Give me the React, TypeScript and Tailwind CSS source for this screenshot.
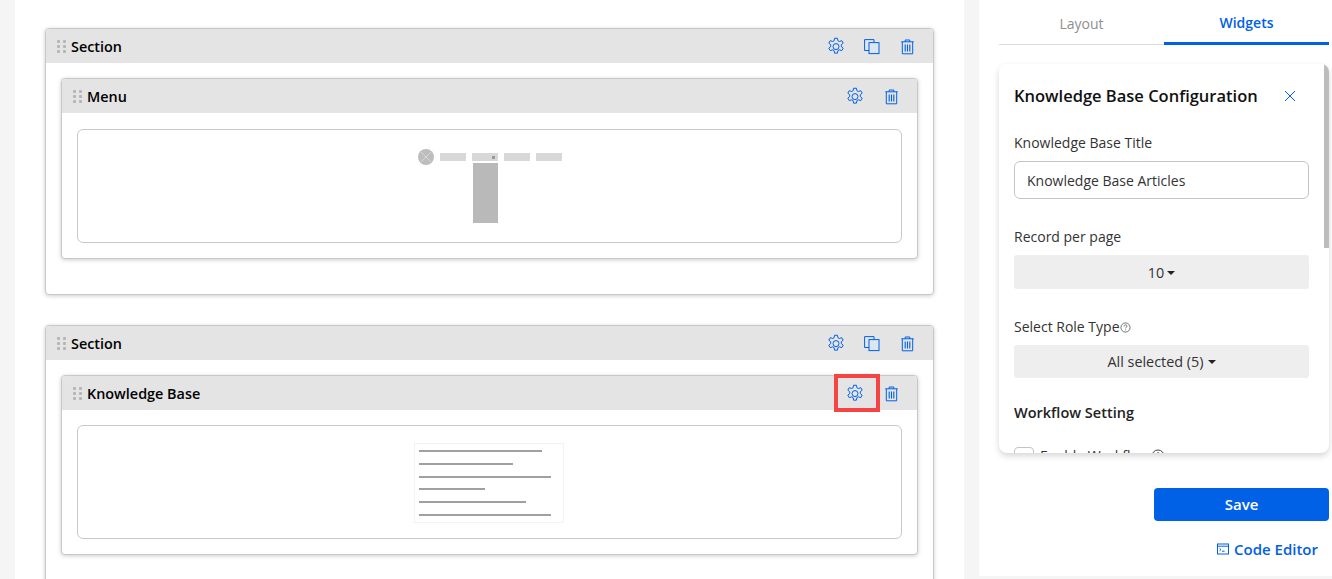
import { ReactNode } from 'react';

const BLUE = '#0060e6';

function GripIcon() {
  return (
    <svg width="9" height="14" viewBox="0 0 9 14" className="shrink-0" fill="#b5b5b5">
      <rect x="0" y="0" width="3" height="3" rx="1" />
      <rect x="6" y="0" width="3" height="3" rx="1" />
      <rect x="0" y="5" width="3" height="3" rx="1" />
      <rect x="6" y="5" width="3" height="3" rx="1" />
      <rect x="0" y="10" width="3" height="3" rx="1" />
      <rect x="6" y="10" width="3" height="3" rx="1" />
    </svg>
  );
}

function GearIcon() {
  return (
    <svg width="20" height="20" viewBox="0 0 24 24" fill="none" stroke={BLUE} strokeWidth="1.2" strokeLinejoin="round">
      <path d="M10.3 1.5h3.4l.6 3c.6.2 1.2.5 1.7.9l2.9-1 1.7 3-2.3 2c.1.6.1 1.3 0 2l2.3 2-1.7 3-2.9-1c-.5.4-1.1.7-1.7.9l-.6 3.1h-3.4l-.6-3.1c-.6-.2-1.2-.5-1.7-.9l-2.9 1-1.7-3 2.3-2c-.1-.7-.1-1.4 0-2l-2.3-2 1.7-3 2.9 1c.5-.4 1.1-.7 1.7-.9z" />
      <circle cx="12" cy="11.5" r="3.6" />
    </svg>
  );
}

function CopyIcon() {
  return (
    <svg width="16" height="16" viewBox="0 0 16 16" fill="none" stroke={BLUE} strokeWidth="1">
      <path d="M5 11.5H.6V.6h9.4v3" />
      <rect x="5" y="3.6" width="10" height="11" fill="#dbe6f0" />
    </svg>
  );
}

function TrashIcon() {
  return (
    <svg width="13" height="16" viewBox="0 0 13 16" fill="none" stroke={BLUE} strokeWidth="1">
      <path d="M.3 2.8h12.4M4.2 2.8V1h4.6v1.8M1.3 2.8v12h10.4v-12" />
      <path d="M4.2 5.5v7M6.5 5.5v7M8.8 5.5v7" strokeWidth="1.1" />
    </svg>
  );
}

function Header({ title, copy, redGear }: { title: string; copy?: boolean; redGear?: boolean }) {
  return (
    <div className="flex h-[34px] items-center rounded-t-[4px] bg-[#e4e4e4] pl-[11px] pt-[2px]">
      <GripIcon />
      <span className="ml-[5px] text-[14.4px] font-semibold text-black">{title}</span>
      {copy ? (
        <div className="ml-auto flex items-center pr-[19px]">
          <GearIcon />
          <div className="ml-[18px]">
            <CopyIcon />
          </div>
          <div className="ml-[21px]">
            <TrashIcon />
          </div>
        </div>
      ) : (
        <div className="ml-auto flex items-center pr-[19px]">
          <div className="relative flex">
            <GearIcon />
            {redGear && <div className="absolute left-[-11.5px] top-[-10px] h-[38px] w-[46px] border-[4px] border-[#f44444]" />}
          </div>
          <div className="ml-[20px]">
            <TrashIcon />
          </div>
        </div>
      )}
    </div>
  );
}

function MenuPreview() {
  return (
    <div className="flex h-[112px] items-start justify-center pt-[19px]">
      <div className="flex items-start gap-[6px]">
        <div className="flex h-4 w-4 items-center justify-center rounded-full bg-[#bdbdbd]">
          <svg width="16" height="16" viewBox="0 0 16 16" stroke="#d8d8d8" strokeWidth="1">
            <path d="M3 3l10 10M13 3L3 13" />
          </svg>
        </div>
        <div className="mt-[4px] h-2 w-[26px] bg-[#d8d8d8]" />
        <div className="flex w-[26px] flex-col">
          <div className="relative mt-[4px] h-2 bg-[#d8d8d8]">
            <span className="absolute right-[3px] top-[3px] h-[3px] w-[3px] bg-[#999]" />
          </div>
          <div className="mt-[2px] ml-[1px] h-[60px] bg-[#b9b9b9]" />
        </div>
        <div className="mt-[4px] h-2 w-[26px] bg-[#d8d8d8]" />
        <div className="mt-[4px] h-2 w-[26px] bg-[#d8d8d8]" />
      </div>
    </div>
  );
}

function KbPreview() {
  const widths = [123, 94, 132, 66, 107, 132];
  return (
    <div className="flex h-[112px] items-center justify-center pt-[2px]">
      <div className="mr-[2px] flex h-[80px] w-[150px] flex-col justify-between border border-[#f3f3f3] py-[6px] pl-[4px]">
        {widths.map((w, i) => (
          <div key={i} className="h-[2px] bg-[#a0a0a0]" style={{ width: w }} />
        ))}
      </div>
    </div>
  );
}

function Widget({ title, redGear, children }: { title: string; redGear?: boolean; children: ReactNode }) {
  return (
    <div className="mx-[15px] rounded-[4px] border border-[#c8c8c8] bg-white pb-[15px] shadow-[0_1px_4px_rgba(0,0,0,0.2)]">
      <Header title={title} redGear={redGear} />
      <div className={`mx-[15px] rounded-[6px] border border-[#c9c9c9] ${redGear ? 'mt-[15px]' : 'mt-[16px]'}`}>{children}</div>
    </div>
  );
}

function Section({ children }: { children: ReactNode }) {
  return (
    <div className="mx-[30px] rounded-[4px] border border-[#c8c8c8] bg-white pb-[35px] shadow-[0_1px_4px_rgba(0,0,0,0.2)]">
      <Header title="Section" copy />
      <div className="mt-[15px]">{children}</div>
    </div>
  );
}

function SidePanel() {
  return (
    <div className="flex h-[576px] w-[353px] shrink-0 flex-col bg-white pl-[20px] pr-[3px]">
      <div className="flex h-[45px]">
        <div className="flex w-[165px] items-center justify-center border-b border-[#dcdcdc] pt-[2px] text-[14px] text-[#8f8f8f]">
          Layout
        </div>
        <div className="flex flex-1 items-center justify-center border-b-[3px] border-[#0060e6] pt-[2px] text-[14px] font-semibold text-[#0060e6]">
          Widgets
        </div>
      </div>

      <div className="relative mt-[19px] h-[389px] overflow-hidden rounded-[8px] bg-white pl-[15px] pr-[20px] shadow-[0_3px_6px_rgba(0,0,0,0.16)]">
        <div className="absolute right-0 top-0 h-[184px] w-[5px] bg-[#bdbdbd]" />
        <div className="mt-[21px] flex h-[22px] items-center justify-between">
          <span className="text-[16.5px] font-semibold text-[#111]">Knowledge Base Configuration</span>
          <svg width="12" height="12" viewBox="0 0 12 12" stroke={BLUE} strokeWidth="1" className="mr-[13px]">
            <path d="M1 1l10 10M11 1L1 11" />
          </svg>
        </div>

        <div className="mt-[26px] text-[14px] leading-[20px] text-[#333]">Knowledge Base Title</div>
        <div className="mt-[8px] flex h-[38px] items-center rounded-[6px] border border-[#c4c4c4] pl-3 text-[14px] text-[#333]">
          Knowledge Base Articles
        </div>

        <div className="mt-[28px] text-[14px] leading-[20px] text-[#333]">Record per page</div>
        <div className="mt-[8px] flex h-[34px] items-center justify-center gap-[3px] rounded-[3px] bg-[#eeeeee] pt-[1px] text-[14.4px] text-[#333]">
          10
          <span className="h-0 w-0 border-x-[4px] border-t-[4px] border-x-transparent border-t-[#222]" />
        </div>

        <div className="mt-[28px] flex items-center text-[14px] leading-[20px] text-[#333]">
          Select Role Type
          <svg width="11" height="11" viewBox="0 0 11 11" fill="none" stroke="#555" strokeWidth="0.8">
            <circle cx="5.5" cy="5.5" r="4.6" />
            <path d="M4 4.4c0-2 3-2 3-.2 0 1-1.4 1-1.4 2.2M5.6 7.4v1" />
          </svg>
        </div>
        <div className="mt-[8px] flex h-[33px] items-center justify-center gap-[4px] rounded-[3px] bg-[#eeeeee] text-[14.4px] text-[#333]">
          All selected (5)
          <span className="h-0 w-0 border-x-[4px] border-t-[4px] border-x-transparent border-t-[#222]" />
        </div>

        <div className="mt-[25px] text-[14.5px] font-semibold leading-[20px] text-[#222]">Workflow Setting</div>

        <div className="mt-[22px] flex items-center">
          <div className="h-[18px] w-[20px] shrink-0 rounded-[4px] border border-[#c4c4c4]" />
          <span className="ml-[6px] text-[14px] text-[#333]">Enable Workflow</span>
          <svg width="14" height="14" viewBox="0 0 14 14" fill="none" stroke="#444" strokeWidth="1" className="ml-[1px]">
            <circle cx="7" cy="7" r="6" />
            <path d="M5.2 5.6c0-2.4 3.6-2.4 3.6-.2 0 1.2-1.8 1.2-1.8 2.8M7 9.4v1.2" />
          </svg>
        </div>
      </div>

      <div className="mt-[35px] flex justify-end">
        <button className="h-[33px] w-[175px] rounded-[4px] bg-[#0060e6] text-[15px] font-semibold text-white">Save</button>
      </div>
      <div className="mt-[17px] flex items-center justify-end gap-[5px] pr-[11px] text-[15px] font-semibold text-[#0060e6]">
        <svg width="12" height="12" viewBox="0 0 12 12" fill="none" stroke={BLUE} strokeWidth="1">
          <rect x="0.5" y="1" width="11" height="10" />
          <path d="M0.5 3.2h11" />
          <path d="M2.6 5.4l1.4 1.2-1.4 1.2M5 8.2h2.6" />
        </svg>
        Code Editor
      </div>
    </div>
  );
}

export default function App() {
  return (
    <div className="flex h-[579px] w-[1332px] overflow-hidden bg-[#f5f5f5] font-['Open_Sans',sans-serif]">
      <div className="ml-[15px] h-[579px] w-[949px] shrink-0 overflow-hidden bg-white pt-[28px]">
        <div className="flex flex-col gap-[30px]">
          <Section>
            <Widget title="Menu">
              <MenuPreview />
            </Widget>
          </Section>
          <Section>
            <Widget title="Knowledge Base" redGear>
              <KbPreview />
            </Widget>
          </Section>
        </div>
      </div>
      <div className="ml-[15px]">
        <SidePanel />
      </div>
    </div>
  );
}
